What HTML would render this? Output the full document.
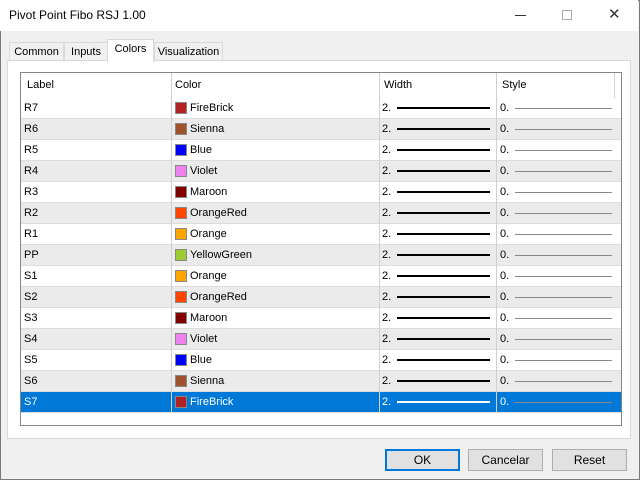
<!DOCTYPE html>
<html><head><style>
*{margin:0;padding:0;box-sizing:border-box}
body{width:640px;height:480px;background:#f0f0f0;font-family:"Liberation Sans",sans-serif;font-size:11px;color:#000;position:relative;overflow:hidden}
.win{position:absolute;left:0;top:0;width:640px;height:480px;border:1px solid #7a7a7a}
.title{position:absolute;left:0;top:0;width:638px;height:31px;background:#fff}
.title span{position:absolute;left:9px;top:8px;font-size:12px}
.a{position:absolute}
.tab{position:absolute;top:42px;height:19px;border:1px solid #d9d9d9;border-bottom:none;background:#f0f0f0;text-align:center;line-height:18px}
.panel{position:absolute;left:7px;top:60px;width:624px;height:379px;background:#fff;border:1px solid #d9d9d9}
.list{position:absolute;left:20px;top:72px;width:602px;height:354px;border:1px solid #828790;background:#fff}
.row{position:absolute;left:0;width:600px;height:21px}
.c{position:absolute;top:0;height:21px;line-height:21px;border-right:1px solid #d0d0d0}
.sw{position:absolute;left:3px;top:4px;width:12px;height:12px;border:1px solid #888}
.btn{position:absolute;top:449px;width:75px;height:22px;border:1px solid #adadad;background:#e1e1e1;text-align:center;line-height:20px;font-size:12px}
</style></head><body>
<div class="win"></div>
<div class="title"><span>Pivot Point Fibo RSJ 1.00</span>
<div class="a" style="left:515px;top:15px;width:11px;height:1px;background:#333"></div>
<div class="a" style="left:562px;top:10px;width:10px;height:10px;border:1px solid #aaa"></div>
<div class="a" style="left:608px;top:9px;font-size:15px;color:#333;line-height:12px">✕</div>
</div>
<div class="tab" style="left:9px;width:55px">Common</div>
<div class="tab" style="left:64px;width:44px">Inputs</div>
<div class="tab" style="left:154px;width:69px">Visualization</div>
<div class="panel"></div>
<div class="tab" style="left:107px;top:39px;width:47px;height:23px;background:#fff;z-index:2">Colors</div>
<div class="list">
<div class="row" style="top:0;height:25px">
<div class="c" style="left:0;width:151px;height:25px;line-height:25px;padding-left:6px">Label</div>
<div class="c" style="left:151px;width:208px;height:25px;line-height:25px;padding-left:3px">Color</div>
<div class="c" style="left:359px;width:117px;height:25px;line-height:25px;padding-left:4px">Width</div>
<div class="c" style="left:476px;width:118px;height:25px;line-height:25px;padding-left:5px">Style</div>
</div>
<div id="rows"></div>
</div>
<div class="btn" style="left:385px;border:2px solid #0078d7;line-height:18px">OK</div>
<div class="btn" style="left:468px">Cancelar</div>
<div class="btn" style="left:552px">Reset</div>
<script>
var d=[["R7","FireBrick","#b22222"],["R6","Sienna","#a0522d"],["R5","Blue","#0000ff"],["R4","Violet","#ee82ee"],["R3","Maroon","#800000"],["R2","OrangeRed","#ff4500"],["R1","Orange","#ffa500"],["PP","YellowGreen","#9acd32"],["S1","Orange","#ffa500"],["S2","OrangeRed","#ff4500"],["S3","Maroon","#800000"],["S4","Violet","#ee82ee"],["S5","Blue","#0000ff"],["S6","Sienna","#a0522d"],["S7","FireBrick","#b22222"]];
var h="";
d.forEach(function(r,i){var sel=i==14;var bg=sel?"#0078d7":(i%2?"#ebebeb":"#fff");var fc=sel?"#fff":"#000";var ln=sel?"#fff":"#000";
h+='<div class="row" style="top:'+(25+i*21)+'px;background:'+bg+';color:'+fc+';border-bottom:1px solid #ddd">'+
'<div class="c" style="left:0;width:151px;padding-left:3px">'+r[0]+'</div>'+
'<div class="c" style="left:151px;width:208px"><div class="sw" style="background:'+r[2]+'"></div><span style="position:absolute;left:18px">'+r[1]+'</span></div>'+
'<div class="c" style="left:359px;width:117px;padding-left:2px">2.<div class="a" style="left:17px;top:9px;width:93px;height:2px;background:'+ln+'"></div></div>'+
'<div class="c" style="left:476px;width:124px;padding-left:3px;border-right:none">0.<div class="a" style="left:18px;top:10px;width:97px;height:1px;background:#888"></div></div></div>';});
document.getElementById("rows").innerHTML=h;
</script>
</body></html>
